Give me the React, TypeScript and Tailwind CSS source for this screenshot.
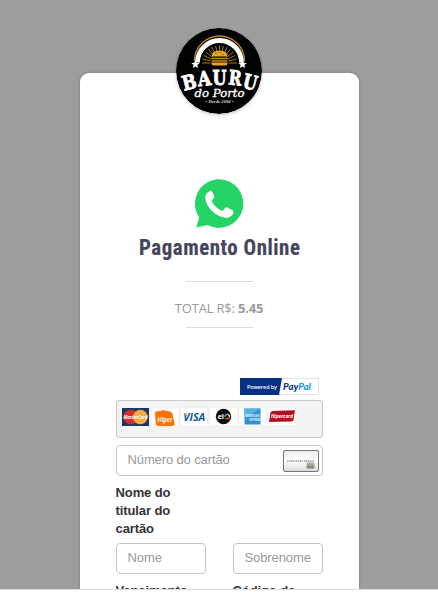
import React from "react";

function Logo() {
  const rays = Array.from({ length: 15 }, (_, i) => 180 + (i * 180) / 14);
  return (
    <svg viewBox="0 0 86 86" className="size-[86px] shrink-0 rounded-full shadow-[0_1px_3px_rgba(0,0,0,0.25)]">
      <circle cx="43" cy="43" r="43" fill="#020202" />
      <path d="M18.500 33 A24.800 24.800 0 0 1 68.500 33" fill="none" stroke="#c48a1c" strokeWidth="1.3" />
      <path d="M21.500 34.500 A22 22 0 0 1 65.500 34.500" fill="none" stroke="#fff" strokeWidth="4.800" />
      {rays.map((a) => {
        const r = (a * Math.PI) / 180;
        return (
          <line
            key={a}
            x1={43.5 + 9 * Math.cos(r)}
            y1={35 + 9 * Math.sin(r)}
            x2={43.5 + 17.5 * Math.cos(r)}
            y2={35 + 17.5 * Math.sin(r)}
            stroke="#a87619"
            strokeWidth="1"
          />
        );
      })}
      <path d="M35.500 28.500 Q35.500 22.500 43.500 22.500 Q51.500 22.500 51.500 28.500Z" fill="#e5a62c" />
      <path d="M35.500 30.500H51.500M35.500 33H51.500" stroke="#c98d20" strokeWidth="1.3" />
      <path d="M35.500 34.500H51.500V35.500Q51.500 37.500 49.500 37.500H37.500Q35.500 37.500 35.500 35.500Z" fill="#e5a62c" />
      <path d="M39.500 25.500h1M43.500 24.500h1M46.500 26.500h1" stroke="#4b3305" strokeWidth="1" />
      <path d="M19.500 32l1.200 2.800 3 .2-2.300 2 .7 3-2.600-1.600-2.600 1.600.7-3-2.300-2 3-.2z" fill="#fff" />
      <path d="M66.500 32l1.200 2.800 3 .2-2.300 2 .7 3-2.600-1.600-2.600 1.600.7-3-2.300-2 3-.2z" fill="#fff" />
      <g fill="#fff" stroke="#fff" strokeWidth="0.9" fontFamily="'DejaVu Serif', serif" fontWeight="700" fontSize="20" textAnchor="middle">
        <text transform="translate(15 61) rotate(-14) scale(.84 1)">B</text>
        <text transform="translate(29 57.500) rotate(-6) scale(.85 1)">A</text>
        <text transform="translate(43.500 56.500) scale(.8 1)">U</text>
        <text transform="translate(58.500 57) rotate(6) scale(.78 1)">R</text>
        <text transform="translate(72.500 61) rotate(14) scale(.8 1)">U</text>
      </g>
      <text x="43.500" y="69" fill="#fff" fontFamily="'DejaVu Serif', serif" fontStyle="italic" fontSize="11" stroke="#fff" strokeWidth=".3" textAnchor="middle" textLength="50" lengthAdjust="spacingAndGlyphs">do Porto</text>
      <text x="43.500" y="74.500" fill="#ddd" fontFamily="'Liberation Serif', serif" fontStyle="italic" fontWeight="700" fontSize="4.500" textAnchor="middle" textLength="28">• Desde 2004 •</text>
    </svg>
  );
}

function WhatsApp() {
  return (
    <svg viewBox="0 0 50 50" className="size-[50px]">
      <path d="M25.200 .3A24.300 24.300 0 1 1 13.500 46L2.300 48.500 5.200 38.300A24.300 24.300 0 0 1 25.200 .3Z" fill="#25d366" />
      <path d="M15.500 12.200C12 14 10.800 17 11.500 20.500C13 29 22 37.500 31 38.700C35 39.200 38.500 37 39.500 33.500C39.800 32.300 39.500 31.800 38.500 31.200L33.500 28.500C32.500 28 31.800 28.200 31.100 29.100L29.300 31.300C28.600 32 28 32 27.100 31.500C23 29.500 20 26.500 18 22.700C17.600 21.900 17.800 21.400 18.400 20.700L19.900 18.900C20.400 18.200 20.500 17.700 20.200 17L18.200 12.700C17.700 11.700 16.700 11.600 15.500 12.200Z" fill="#fff" />
    </svg>
  );
}

function CardBrands() {
  return (
    <div className="flex h-[38px] items-start rounded-[3px] border border-[#c8c8c8] bg-[#f3f3f3] pl-[5px] pt-[7px]">
      <svg viewBox="0 0 176 19" className="h-[19px] w-[176px] overflow-visible" fontFamily="'Open Sans', sans-serif" fontWeight="700" fontStyle="italic" textAnchor="middle">
        <rect x="0" y="0" width="27" height="18" fill="#1b3766" />
        <circle cx="8.700" cy="9" r="7.300" fill="#d72d2b" />
        <circle cx="18.300" cy="9" r="7.300" fill="#f3aa3e" />
        <text x="13.500" y="11.300" fontSize="6" fill="#fff" textLength="24" lengthAdjust="spacingAndGlyphs">MasterCard</text>
        <rect x="30" y="0" width="26" height="18" fill="#fff" />
        <path d="M33 5Q33 3.500 35 3.300L39 3 40 2 48 3.500Q50 4 50.500 6L52.500 15Q53 18 50 18H36Q34 18 33.800 15Z" fill="#ff7200" />
        <text x="43" y="13.500" fontSize="6.500" fill="#fff" fontStyle="normal" textLength="15" lengthAdjust="spacingAndGlyphs">Hiper</text>
        <rect x="58.500" y="0" width="27" height="18" fill="#fff" stroke="#ececec" strokeWidth=".5" />
        <text x="72.300" y="13.300" fontSize="11" fill="#075a9c" textLength="22" lengthAdjust="spacingAndGlyphs">VISA</text>
        <path d="M61.500 5h3l1 4z" fill="#efa33a" />
        <rect x="88" y="0" width="27" height="17" fill="#fff" />
        <circle cx="101.500" cy="8.500" r="7.700" fill="#0b0b12" />
        <text x="98.800" y="11" fontSize="7" fill="#fff" fontStyle="normal">el</text>
        <path d="M103 9A2.300 2.300 0 0 1 106 6.500" fill="none" stroke="#25a4d8" strokeWidth="1.500" />
        <path d="M106 6.500A2.300 2.300 0 0 1 107.500 9" fill="none" stroke="#ffd328" strokeWidth="1.500" />
        <path d="M107.500 9A2.300 2.300 0 0 1 103.500 10" fill="none" stroke="#e34932" strokeWidth="1.500" />
        <rect x="117.500" y="0" width="26" height="17" fill="#fff" />
        <rect x="122.500" y=".5" width="16" height="16" fill="#2f94cf" />
        <path d="M122.500 .5h16L122.500 10z" fill="#5cb4e2" />
        <g fill="#e6f5fc" fontStyle="normal" fontSize="3.800">
          <text x="130.300" y="9.300" textLength="14" lengthAdjust="spacingAndGlyphs">AMERICAN</text>
          <text x="132.800" y="12.800" textLength="11" lengthAdjust="spacingAndGlyphs">EXPRESS</text>
        </g>
        <rect x="146" y="0" width="27" height="17" fill="#fff" />
        <path d="M148.500 4.500Q149 3 151 3L173 2.300 171.500 12Q171 13.500 169 13.500L147 14Z" fill="#b50f22" />
        <text x="160" y="10.300" fontSize="6" fill="#fff" textLength="22" lengthAdjust="spacingAndGlyphs">Hipercard</text>
      </svg>
    </div>
  );
}

function PayPalBadge() {
  return (
    <svg viewBox="0 0 79 17" className="h-[17px] w-[79px]" fontFamily="'Open Sans', sans-serif" textAnchor="middle">
      <rect x=".5" y=".5" width="78" height="16" fill="#fff" stroke="#e4e4e4" />
      <path d="M0 0H42L39 17H0Z" fill="#063080" />
      <text x="22" y="10.600" fontSize="5.500" fontWeight="600" fill="#fff" textLength="30">Powered by</text>
      <text x="57" y="11.600" fontFamily="Lato, sans-serif" fontSize="9" fontStyle="italic" fontWeight="900" textLength="28" lengthAdjust="spacingAndGlyphs" fill="#103580">
        Pay<tspan fill="#159bd7">Pal</tspan>
      </text>
    </svg>
  );
}

function CardGlyph() {
  return (
    <svg viewBox="0 0 36 22" className="h-[22px] w-[36px]">
      <defs>
        <linearGradient id="card" x2="0" y2="1">
          <stop stopColor="#ececec" /><stop offset=".5" stopColor="#fff" /><stop offset="1" stopColor="#d8d8d8" />
        </linearGradient>
        <linearGradient id="chip" x2="0" y2="1">
          <stop stopColor="#c9c9bd" /><stop offset="1" stopColor="#77776c" />
        </linearGradient>
      </defs>
      <rect x=".5" y=".5" width="35" height="21" rx="1.500" fill="url(#card)" stroke="#747474" />
      <path d="M4 11H31" stroke="#b4b4b4" strokeWidth="2" strokeDasharray="1.500 .5 1.500 .5 1.500 .5 1.500 1" />
      <rect x="23.500" y="12" width="8" height="6.500" rx="1.500" fill="url(#chip)" />
    </svg>
  );
}

const fieldClass =
  "h-[31px] min-w-0 rounded-[4px] border border-[#c4c4c4] bg-white px-[11px] pb-[2px] text-[13px] tracking-[-0.1px] text-gray-700 outline-none placeholder:text-[#999]";

export default function App() {
  return (
    <div className="h-[592px] overflow-hidden bg-white font-['Liberation_Sans',Arial,sans-serif]">
      <main className="flex h-[589px] flex-col items-center overflow-hidden bg-[#9d9d9d] pt-[28px]">
        <section className="mt-[45px] flex w-[279px] shrink-0 flex-col items-center rounded-t-[9px] bg-white px-[36px] shadow-[0_0_3px_rgba(0,0,0,0.25)]">
          <div className="-mt-[45px] h-[86px]"><Logo /></div>
          <div className="mt-[65px] h-[50px]"><WhatsApp /></div>
          <h1 className="mt-[4px] flex h-[30px] w-[161px] items-center justify-center">
            <svg viewBox="0 0 161 30" className="h-[30px] w-[161px] overflow-visible">
              <text x="0" y="21.500" fill="#44465c" stroke="#44465c" strokeWidth=".2" fontFamily="'Liberation Sans Narrow','Roboto Condensed',Roboto,sans-serif" fontSize="22" fontWeight="700" letterSpacing=".6" textLength="161.500" lengthAdjust="spacingAndGlyphs">Pagamento Online</text>
            </svg>
          </h1>
          <div className="mt-[18px] flex h-[47px] w-[67px] items-center justify-center border-y border-[#dcdcdc]">
            <p className="mt-[8px] whitespace-nowrap font-['Open_Sans',sans-serif] text-[13px] tracking-[-0.2px] text-[#999]">
              TOTAL R$: <b>5.45</b>
            </p>
          </div>
          <form className="mt-[50px] flex w-[207px] flex-col">
            <div className="mr-[4px] flex h-[22px] self-end"><PayPalBadge /></div>
            <CardBrands />
            <div className="mt-[7px] flex h-[31px] items-center rounded-[4px] border border-[#c4c4c4] bg-white pl-[11px] pr-[3px]">
              <input className="min-w-0 flex-1 pb-[2px] text-[13px] tracking-[-0.12px] outline-none placeholder:text-[#999]" placeholder="Número do cartão" />
              <CardGlyph />
            </div>
            <label className="mt-[8px] w-[80px] text-[13px] leading-[18px] font-bold tracking-[-0.1px] text-[#333]">Nome do titular do cartão</label>
            <div className="mt-[5px] grid grid-cols-2 gap-[27px]">
              <input className={fieldClass} placeholder="Nome" />
              <input className={fieldClass} placeholder="Sobrenome" />
            </div>
            <div className="mt-[8px] grid grid-cols-2 gap-[27px] text-[13px] leading-[18px] font-bold tracking-[-0.1px] text-[#333]">
              <label>Vencimento</label>
              <label className="w-[80px]">Código de</label>
            </div>
          </form>
        </section>
      </main>
      <div className="h-[3px] border-t border-[#ddd] bg-white" />
    </div>
  );
}
